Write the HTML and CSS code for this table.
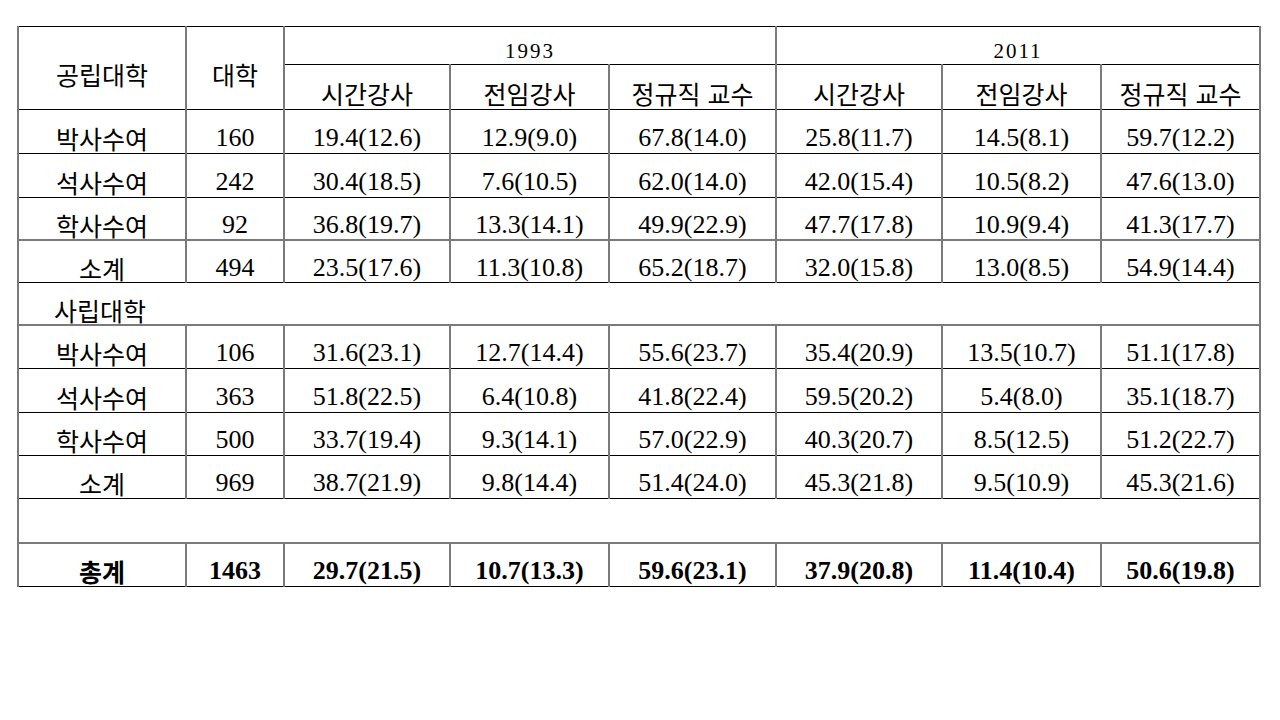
FILE: index.html
```html
<!DOCTYPE html>
<html lang="ko">
<head>
<meta charset="utf-8">
<title>표</title>
<link rel="stylesheet" href="styles.css">
</head>
<body>
<table class="tbl">
  <colgroup>
    <col class="c1"><col class="c2"><col class="c3"><col class="c4"><col class="c5"><col class="c6"><col class="c7"><col class="c8">
  </colgroup>
  <tr class="h1">
    <td rowspan="2" class="ko">공립대학</td>
    <td rowspan="2" class="ko">대학</td>
    <td colspan="3" class="yr">1993</td>
    <td colspan="3" class="yr">2011</td>
  </tr>
  <tr class="h2">
    <td class="ko">시간강사</td><td class="ko">전임강사</td><td class="ko">정규직 교수</td>
    <td class="ko">시간강사</td><td class="ko">전임강사</td><td class="ko">정규직 교수</td>
  </tr>
  <tr class="r a">
    <td class="ko">박사수여</td><td>160</td><td>19.4(12.6)</td><td>12.9(9.0)</td><td>67.8(14.0)</td><td>25.8(11.7)</td><td>14.5(8.1)</td><td>59.7(12.2)</td>
  </tr>
  <tr class="r a">
    <td class="ko">석사수여</td><td>242</td><td>30.4(18.5)</td><td>7.6(10.5)</td><td>62.0(14.0)</td><td>42.0(15.4)</td><td>10.5(8.2)</td><td>47.6(13.0)</td>
  </tr>
  <tr class="r g b">
    <td class="ko">학사수여</td><td>92</td><td>36.8(19.7)</td><td>13.3(14.1)</td><td>49.9(22.9)</td><td>47.7(17.8)</td><td>10.9(9.4)</td><td>41.3(17.7)</td>
  </tr>
  <tr class="r b">
    <td class="ko">소계</td><td>494</td><td>23.5(17.6)</td><td>11.3(10.8)</td><td>65.2(18.7)</td><td>32.0(15.8)</td><td>13.0(8.5)</td><td>54.9(14.4)</td>
  </tr>
  <tr class="r g b">
    <td colspan="8" class="ko sec">사립대학</td>
  </tr>
  <tr class="r">
    <td class="ko">박사수여</td><td>106</td><td>31.6(23.1)</td><td>12.7(14.4)</td><td>55.6(23.7)</td><td>35.4(20.9)</td><td>13.5(10.7)</td><td>51.1(17.8)</td>
  </tr>
  <tr class="r a">
    <td class="ko">석사수여</td><td>363</td><td>51.8(22.5)</td><td>6.4(10.8)</td><td>41.8(22.4)</td><td>59.5(20.2)</td><td>5.4(8.0)</td><td>35.1(18.7)</td>
  </tr>
  <tr class="r">
    <td class="ko">학사수여</td><td>500</td><td>33.7(19.4)</td><td>9.3(14.1)</td><td>57.0(22.9)</td><td>40.3(20.7)</td><td>8.5(12.5)</td><td>51.2(22.7)</td>
  </tr>
  <tr class="r">
    <td class="ko">소계</td><td>969</td><td>38.7(21.9)</td><td>9.8(14.4)</td><td>51.4(24.0)</td><td>45.3(21.8)</td><td>9.5(10.9)</td><td>45.3(21.6)</td>
  </tr>
  <tr class="r g a">
    <td colspan="8"></td>
  </tr>
  <tr class="r tot">
    <td class="ko">총계</td><td>1463</td><td>29.7(21.5)</td><td>10.7(13.3)</td><td>59.6(23.1)</td><td>37.9(20.8)</td><td>11.4(10.4)</td><td>50.6(19.8)</td>
  </tr>
</table>
</body>
</html>
```

FILE: styles.css
```css
html, body {
  margin: 0;
  padding: 0;
  background: #ffffff;
}

.tbl {
  margin: 26px 0 0 17px;
  width: 1242px;
  table-layout: fixed;
  border-collapse: collapse;
  font-family: "Liberation Serif", "Noto Sans CJK KR", serif;
  font-size: 26px;
  color: #000;
}

.c1 { width: 168px; }
.c2 { width: 98px; }
.c3 { width: 166px; }
.c4 { width: 159px; }
.c5 { width: 167px; }
.c6 { width: 166px; }
.c7 { width: 159px; }
.c8 { width: 159px; }

.tbl td {
  border-top: 1px solid #000;
  border-bottom: 1px solid #000;
  border-left: 2px solid #7a7a7a;
  border-right: 2px solid #7a7a7a;
  text-align: center;
  vertical-align: middle;
  padding: 12px 0 0 0;
  line-height: 28px;
  white-space: nowrap;
}

.tbl .ko {
  font-family: "Noto Sans CJK KR", sans-serif;
  font-size: 25px;
  font-weight: 400;
}

.h1 td { height: 27px; }
.h2 td { height: 32px; }
.r td { height: 30px; }
.r.a td { height: 31px; }
.r.b td { height: 29px; }

.tbl .yr {
  font-size: 21px;
  letter-spacing: 2px;
  line-height: 22px;
  padding-top: 10px;
}

.g td {
  border-bottom: 2px solid #7a7a7a;
}

.tbl .sec {
  text-align: left;
  padding-left: 35px;
}

.tot td {
  font-weight: 700;
}

.tot td.ko {
  font-weight: 700;
}
```
